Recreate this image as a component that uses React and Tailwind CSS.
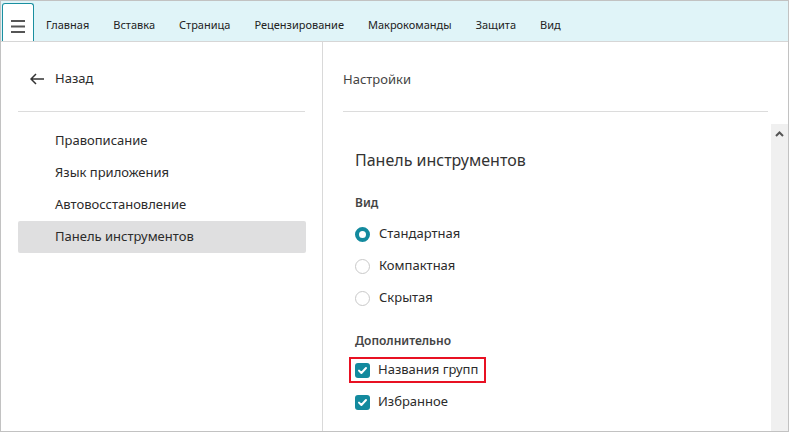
import React from "react";

const tabs = ["Главная", "Вставка", "Страница", "Рецензирование", "Макрокоманды", "Защита", "Вид"];
const menu = ["Правописание", "Язык приложения", "Автовосстановление", "Панель инструментов"];

function Radio({ checked, label }) {
  return (
    <div className="flex h-[32px] items-center">
      {checked ? (
        <span className="h-[15px] w-[15px] rounded-full border-[4px] border-[#138a9e] bg-white" />
      ) : (
        <span className="h-[15px] w-[15px] rounded-full border border-[#c9c9c9] bg-white" />
      )}
      <span className="ml-[9px] text-[13px] text-[#2b2b2b]">{label}</span>
    </div>
  );
}

function Check({ label }) {
  return (
    <>
      <span className="flex h-[15px] w-[15px] items-center justify-center rounded-[3px] bg-[#138a9e]">
        <svg width="11" height="11" viewBox="0 0 11 11">
          <path d="M2 5.6 L4.4 8 L9 3" fill="none" stroke="white" strokeWidth="2" strokeLinecap="round" strokeLinejoin="round" />
        </svg>
      </span>
      <span className="ml-[8px] text-[13px] text-[#2b2b2b]">{label}</span>
    </>
  );
}

export default function App() {
  return (
    <div
      className="flex h-[432px] w-[789px] flex-col overflow-hidden border border-[#c2c2c2] bg-white"
      style={{ fontFamily: '"Noto Sans", "Open Sans", sans-serif' }}
    >
      {/* верхняя панель */}
      <div className="flex h-[41px] shrink-0 items-end border-b border-[#d6d6d6] bg-[#e0f4f8]">
        <div className="ml-[1px] flex h-[38px] w-[32px] items-center justify-center rounded-t-[3px] border border-b-0 border-[#1a8fa0] bg-white pt-[8px]">
          <svg width="14" height="13" viewBox="0 0 14 13">
            <rect x="0" y="0" width="14" height="2" fill="#555" />
            <rect x="0" y="5.5" width="14" height="2" fill="#555" />
            <rect x="0" y="11" width="14" height="2" fill="#555" />
          </svg>
        </div>
        <div className="flex h-[39px] items-center pt-[8px]">
          {tabs.map((t) => (
            <span key={t} className="px-[12px] text-[11px] text-[#222]">
              {t}
            </span>
          ))}
        </div>
      </div>

      <div className="flex min-h-0 flex-1">
        {/* левая колонка */}
        <div className="w-[322px] shrink-0 border-r border-[#d9d9d9] px-[17px]">
          <div className="flex h-[70px] items-start border-b border-[#dcdcdc] pt-[27px]">
            <div className="flex h-[20px] items-center pl-[12px]">
              <svg width="14" height="12" viewBox="0 0 14 12">
                <path d="M6 1 L1 6 L6 11 M1 6 H14" fill="none" stroke="#333" strokeWidth="1.5" />
              </svg>
              <span className="ml-[11px] text-[13px] text-[#2b2b2b]">Назад</span>
            </div>
          </div>
          <div className="mt-[13px] w-[288px]">
            {menu.map((m, i) => (
              <div
                key={m}
                className={
                  "flex h-[32px] items-center rounded-[2px] pl-[37px] text-[13px] text-[#2b2b2b] " +
                  (i === 3 ? "bg-[#dfdfe0]" : "")
                }
              >
                {m}
              </div>
            ))}
          </div>
        </div>

        {/* правая колонка */}
        <div className="flex min-w-0 flex-1 flex-col">
          <div className="mx-[20px] flex h-[70px] shrink-0 items-start border-b border-[#dcdcdc] pt-[27px]">
            <span className="h-[20px] text-[13px] leading-[20px] text-[#444]">Настройки</span>
          </div>
          <div className="mt-[12px] flex min-h-0 flex-1">
            <div className="flex-1 pl-[32px] pt-[24px]">
              <div className="h-[24px] text-[16px] leading-[24px] text-[#333]">Панель инструментов</div>
              <div className="mt-[21px] h-[20px] text-[12px] font-semibold leading-[20px] text-[#444]">Вид</div>
              <div className="mt-[5px]">
                <Radio checked label="Стандартная" />
                <Radio label="Компактная" />
                <Radio label="Скрытая" />
              </div>
              <div className="mt-[17px] h-[20px] text-[12px] font-semibold leading-[20px] text-[#444]">
                Дополнительно
              </div>
              <div className="mt-[3px] flex h-[32px] items-center">
                <div className="ml-[-6px] flex h-[26px] items-center border-2 border-[#e81123] pl-[4px] pr-[6px]">
                  <Check label="Названия групп" />
                </div>
              </div>
              <div className="flex h-[32px] items-center">
                <Check label="Избранное" />
              </div>
            </div>
            <div className="flex w-[17px] shrink-0 justify-center bg-[#f0f0f0] pt-[7px]">
              <svg width="9" height="6" viewBox="0 0 9 6">
                <path d="M1 5 L4.5 1.5 L8 5" fill="none" stroke="#555" strokeWidth="2" />
              </svg>
            </div>
          </div>
        </div>
      </div>
    </div>
  );
}
